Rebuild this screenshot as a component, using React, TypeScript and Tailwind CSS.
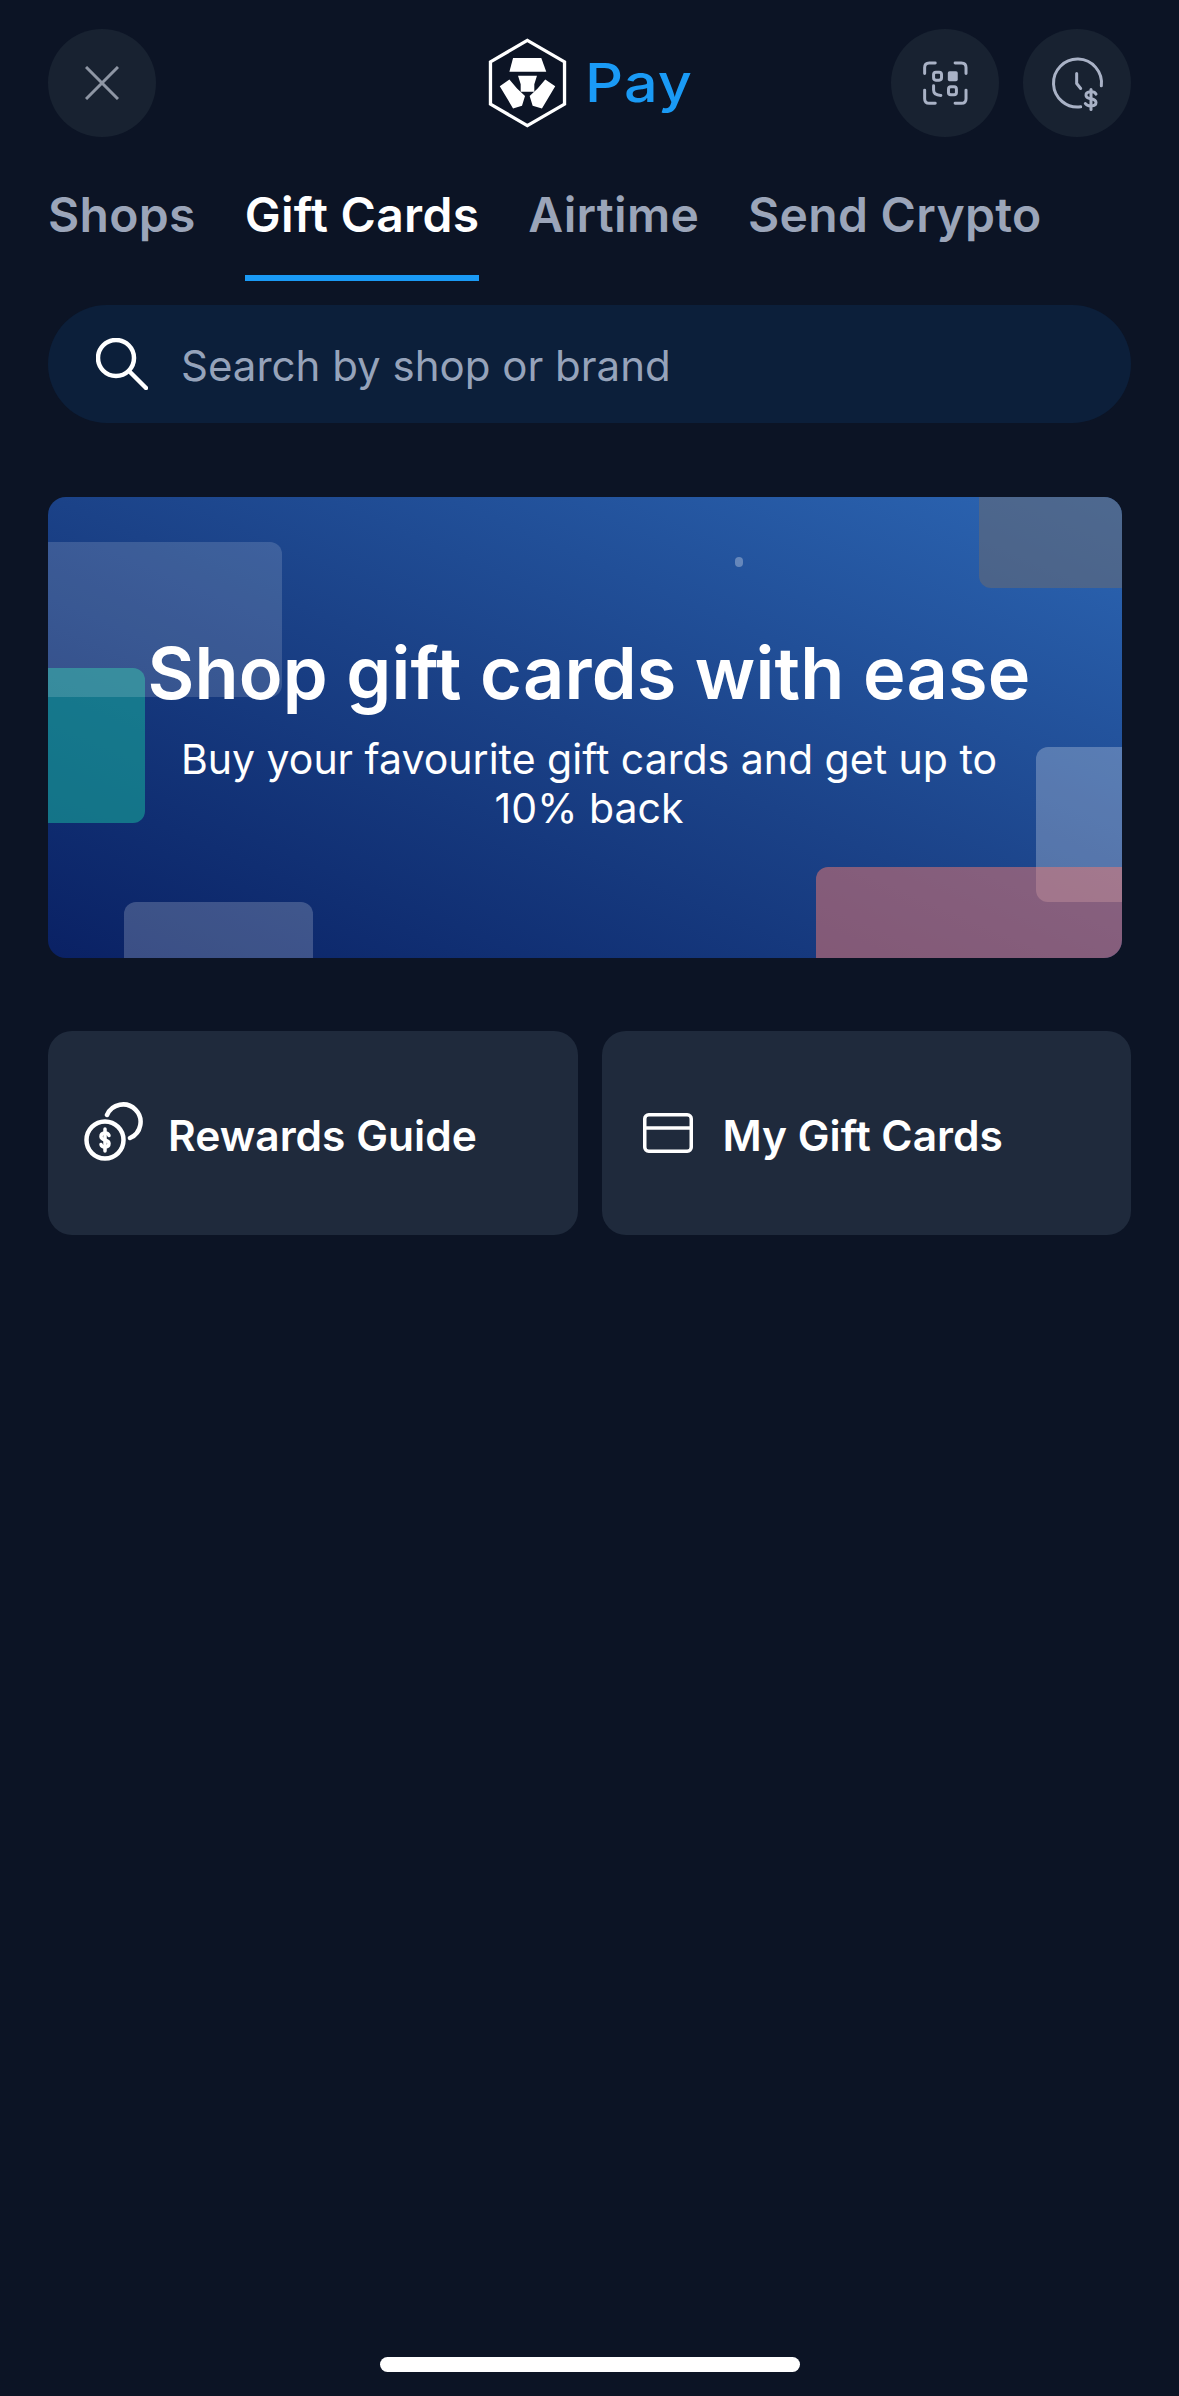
import React from 'react';

const tabs = ['Shops', 'Gift Cards', 'Airtime', 'Send Crypto'];

function CircleButton({ children }: { children: React.ReactNode }) {
  return (
    <button className="flex h-[108px] w-[108px] items-center justify-center rounded-full bg-[#182231]">
      {children}
    </button>
  );
}

function CryptoLogo() {
  return (
    <svg viewBox="140 50 243 277" className="h-[92px] w-[81px]">
      <path d="M261 60 L373 125 V252 L261 317 L150 252 V125 Z" fill="none" stroke="#fff" strokeWidth="10" />
      <path d="M218 113 H303 L318 155 H207 Z" fill="#fff" />
      <path d="M233 167 H290 L282 192 V215 H241 V192 Z" fill="#fff" />
      <path d="M207 178 L178 198 L218 265 L245 257 L254 228 L230 205 Z" fill="#fff" />
      <path d="M315 178 L345 198 L305 265 L277 257 L268 228 L292 205 Z" fill="#fff" />
    </svg>
  );
}

function QrIcon() {
  return (
    <svg viewBox="125 120 142 140" className="h-[47px] w-[47px]" fill="none" stroke="#a9b2c6" strokeWidth="9" strokeLinecap="round">
      <path d="M133 160 V142 Q133 128 147 128 H165" />
      <path d="M225 128 H244 Q258 128 258 142 V160" />
      <path d="M258 210 V236 Q258 250 244 250 H225" />
      <path d="M165 250 H147 Q133 250 133 236 V210" />
      <rect x="160" y="156" width="24" height="24" rx="7" />
      <rect x="203" y="153" width="30" height="30" rx="5" fill="#a9b2c6" stroke="none" />
      <path d="M160 197 V210 Q160 226 182 226" />
      <rect x="205" y="200" width="24" height="24" rx="7" />
    </svg>
  );
}

function ClockIcon() {
  return (
    <svg viewBox="510 105 165 170" className="h-[57px] w-[55px]" fill="none" stroke="#a9b2c6" strokeWidth="9" strokeLinecap="round">
      <path d="M664 197 A72 72 0 1 0 602 260" />
      <path d="M590 160 V190 L602 205" />
      <path d="M648 222 C644 212 618 212 618 225 C618 240 648 232 648 247 C648 260 622 260 616 250" />
      <path d="M633 208 V268" />
    </svg>
  );
}

function CoinsIcon() {
  return (
    <svg viewBox="0 0 62 62" className="h-[62px] w-[62px] shrink-0" fill="none" stroke="#fff" strokeWidth="4.5" strokeLinecap="round">
      <circle cx="23" cy="38" r="18.5" />
      <path d="M25 13 A17.5 17.5 0 1 1 48 36" />
      <path d="M27 33.5 C26 30 19 30 19 34.5 C19 39 27 37 27 41.5 C27 46 20 46 19 42.5" strokeWidth="3.5" />
      <path d="M23 27 V49" strokeWidth="3.5" />
    </svg>
  );
}

function CardIcon() {
  return (
    <svg viewBox="0 0 50 40" className="h-[40px] w-[50px] shrink-0" fill="none" stroke="#fff" strokeWidth="3.5">
      <rect x="1.75" y="1.75" width="46.5" height="36.5" rx="4" />
      <path d="M2 15 H48" />
    </svg>
  );
}

export default function App() {
  return (
    <div className="flex min-h-[2396px] w-[1179px] flex-col bg-[#0c1425] px-12 font-['Inter',sans-serif] text-white">
      <div className="mt-[29px] grid grid-cols-[240px_1fr_240px] items-center">
        <CircleButton>
          <svg viewBox="0 0 34 34" className="h-[34px] w-[34px]" fill="none" stroke="#8e96a4" strokeWidth="3">
            <path d="M1 1 L33 33 M33 1 L1 33" />
          </svg>
        </CircleButton>
        <div className="flex items-center justify-center gap-[17px]">
          <CryptoLogo />
          <span className="inline-block w-[107px] origin-left scale-x-[1.12] text-[53px] leading-none font-medium tracking-[1px] text-[#1a9af5]">
            Pay
          </span>
        </div>
        <div className="flex justify-end gap-6">
          <CircleButton>
            <QrIcon />
          </CircleButton>
          <CircleButton>
            <ClockIcon />
          </CircleButton>
        </div>
      </div>

      <div className="mt-[49px] flex gap-[49px]">
        {tabs.map((tab) => (
          <div
            key={tab}
            className={
              tab === 'Gift Cards'
                ? 'border-b-[6px] border-[#1a9af5] pb-[31px] text-[48px] leading-[58px] font-semibold tracking-[0.3px] text-white'
                : 'border-b-[6px] border-transparent pb-[31px] text-[48px] leading-[58px] font-semibold tracking-[0.3px] text-[#9ba5b9]'
            }
          >
            {tab}
          </div>
        ))}
      </div>

      <div className="mt-6 flex h-[118px] items-center gap-[33px] rounded-full bg-[#0c1f3a] pl-12">
        <svg viewBox="0 0 52 52" className="h-[52px] w-[52px]" fill="none" stroke="#fff" strokeWidth="4.5" strokeLinecap="round">
          <circle cx="20" cy="20" r="18" />
          <path d="M33 33 L50 50" />
        </svg>
        <span className="mt-[2px] text-[42px] text-[#96a3ba]">Search by shop or brand</span>
      </div>

      <div className="relative mt-[74px] flex h-[461px] w-[1074px] flex-col items-center justify-center overflow-hidden rounded-[18px] bg-linear-to-tr from-[#0a2164] via-[#1b4288] to-[#2c66b4] pt-[7px] pl-[8px]">
        <div className="absolute top-[171px] left-0 h-[155px] w-[97px] rounded-r-xl bg-[#17a59a]/60" />
        <div className="absolute top-[45px] left-0 h-[155px] w-[234px] rounded-r-xl bg-white/15" />
        <div className="absolute bottom-0 left-[76px] h-[56px] w-[189px] rounded-t-xl bg-white/20" />
        <div className="absolute top-0 right-0 h-[91px] w-[143px] rounded-bl-xl bg-[#706c6c]/50" />
        <div className="absolute top-[250px] right-0 h-[155px] w-[86px] rounded-l-xl bg-white/25" />
        <div className="absolute right-0 bottom-0 h-[91px] w-[306px] rounded-tl-xl bg-[#f07a70]/50" />
        <div className="absolute top-[60px] left-[687px] h-[10px] w-[8px] rounded-full bg-white/30" />
        <h1 className="relative text-[72px] leading-[86px] font-semibold tracking-[0.2px]">Shop gift cards with ease</h1>
        <p className="relative mt-[19px] w-[860px] text-center text-[41px] leading-[49px]">
          Buy your favourite gift cards and get up to 10% back
        </p>
      </div>

      <div className="mt-[73px] grid grid-cols-2 gap-6">
        <div className="flex h-[204px] items-center gap-6 rounded-3xl bg-[#1f2a3c] pl-[34px]">
          <CoinsIcon />
          <span className="mt-[5px] text-[42.5px] font-semibold">Rewards Guide</span>
        </div>
        <div className="flex h-[204px] items-center gap-[30px] rounded-3xl bg-[#1f2a3c] pl-[41px]">
          <CardIcon />
          <span className="mt-[5px] text-[42.5px] font-semibold">My Gift Cards</span>
        </div>
      </div>

      <div className="mt-auto mb-6 h-[15px] w-[420px] self-center rounded-full bg-white" />
    </div>
  );
}
